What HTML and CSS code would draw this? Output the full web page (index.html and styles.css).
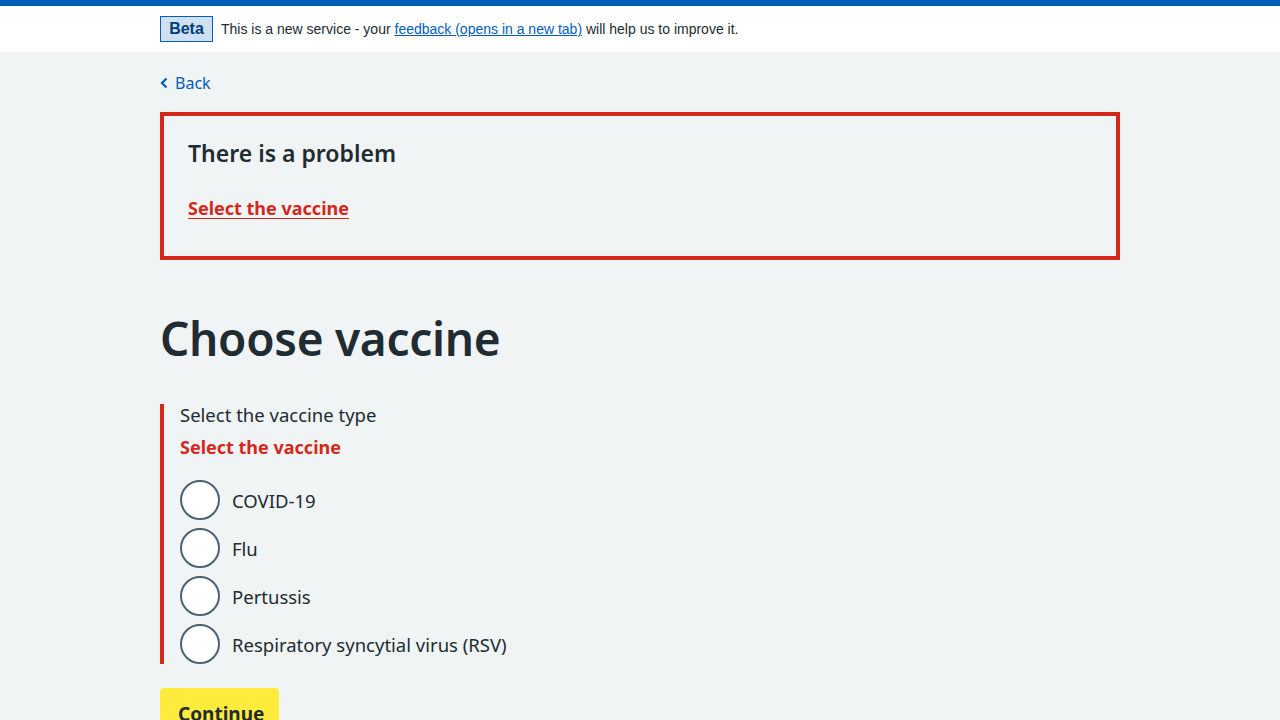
FILE: index.html
```html
<!DOCTYPE html>
<html lang="en">
<head>
<meta charset="utf-8">
<title>Choose vaccine</title>
<link rel="stylesheet" href="styles.css">
</head>
<body>
<div class="topbar"></div>
<div class="phase">
  <div class="container phase-inner">
    <strong class="tag">Beta</strong>
    <span class="phase-text">This is a new service - your <a href="#">feedback (opens in a new tab)</a> will help us to improve it.</span>
  </div>
</div>
<main class="container main">
  <a class="back" href="#">
    <svg class="chev" width="10" height="16" viewBox="0 0 10 16" aria-hidden="true"><path d="M7.5 3.5 L3 8 L7.5 12.5" fill="none" stroke="currentColor" stroke-width="2.2"/></svg>
    <span>Back</span>
  </a>
  <div class="error-summary">
    <h2 class="es-title">There is a problem</h2>
    <a class="es-link" href="#">Select the vaccine</a>
  </div>
  <h1 class="title">Choose vaccine</h1>
  <div class="fieldset">
    <div class="legend">Select the vaccine type</div>
    <div class="err">Select the vaccine</div>
    <div class="radios">
      <label class="radio"><span class="circle"></span><span class="rlabel">COVID-19</span></label>
      <label class="radio"><span class="circle"></span><span class="rlabel">Flu</span></label>
      <label class="radio"><span class="circle"></span><span class="rlabel">Pertussis</span></label>
      <label class="radio"><span class="circle"></span><span class="rlabel">Respiratory syncytial virus (RSV)</span></label>
    </div>
  </div>
  <button class="btn">Continue</button>
</main>
</body>
</html>
```
FILE: styles.css
```css
* { box-sizing: border-box; }
html, body { margin: 0; padding: 0; }
body {
  background: #f0f4f5;
  color: #212b32;
  font-family: "Noto Sans", "Open Sans", sans-serif;
  height: 720px;
  overflow: hidden;
}
.container { width: 960px; margin: 0 auto; }
.topbar { height: 6px; background: #005eb8; }
.phase { background: #fff; height: 46px; }
.phase-inner { display: flex; align-items: center; height: 46px; gap: 8px; }
.tag {
  font-family: "Liberation Sans", Arial, sans-serif;
  font-weight: 700;
  font-size: 16px;
  color: #003d78;
  background: #cfe0f1;
  border: 1px solid #005eb8;
  height: 26px;
  width: 53px;
  display: flex;
  align-items: center;
  justify-content: center;
}
.phase-text {
  font-family: "Liberation Sans", Arial, sans-serif;
  font-size: 14px;
  color: #212b32;
}
.phase-text a { color: #005eb8; }
.main { display: flex; flex-direction: column; align-items: flex-start; }
.back {
  display: flex; align-items: center; gap: 6px;
  margin-top: 20px;
  height: 22px;
  color: #005eb8; text-decoration: none;
  font-size: 16px;
}
.chev { display: block; margin-left: -1px; }
.error-summary {
  margin-top: 18px;
  width: 960px;
  height: 148px;
  border: 4px solid #d5281b;
  padding: 20px 24px;
}
.es-title {
  margin: 0;
  font-size: 23px;
  font-weight: 600;
  line-height: 34px;
}
.es-link {
  display: block;
  margin-top: 24px;
  color: #d5281b;
  font-weight: 700;
  font-size: 18px;
  line-height: 28px;
  text-decoration-thickness: 1px;
  text-underline-offset: 3px;
}
.title {
  margin: 46px 0 0;
  font-size: 46px;
  font-weight: 600;
  line-height: 64px;
  letter-spacing: -0.3px;
}
.fieldset {
  margin-top: 34px;
  border-left: 4px solid #d5281b;
  padding-left: 16px;
  width: 400px;
}
.legend { font-size: 18.5px; line-height: 24px; margin-top: -1px; }
.err { color: #d5281b; font-weight: 700; font-size: 18px; line-height: 24px; margin-top: 8px; }
.radios { margin-top: 21px; display: flex; flex-direction: column; gap: 8px; }
.radio { display: flex; align-items: center; gap: 12px; height: 40px; font-size: 18.5px; }
.circle {
  width: 40px; height: 40px; border-radius: 50%;
  border: 2px solid #4c6272; background: #fff; flex: none;
}
.btn {
  margin-top: 24px;
  background: #ffeb3b;
  border: 0;
  border-radius: 4px;
  color: #212b32;
  font-family: inherit;
  font-weight: 700;
  font-size: 19px;
  padding: 12px 18px;
  line-height: 28px;
  width: 119px;
}
```
